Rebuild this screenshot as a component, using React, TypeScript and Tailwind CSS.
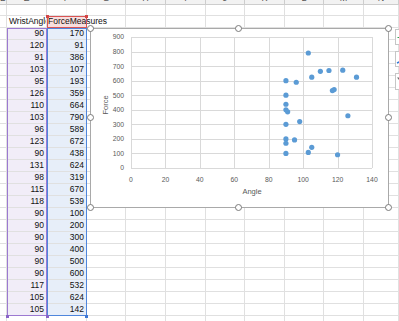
import React from 'react';

const angles = [90, 120, 91, 103, 95, 126, 110, 103, 96, 123, 90, 131, 98, 115, 118, 90, 90, 90, 90, 90, 90, 117, 105, 105];
const forces = [170, 91, 386, 107, 193, 359, 664, 790, 589, 672, 438, 624, 319, 670, 539, 100, 200, 300, 400, 500, 600, 532, 624, 142];

// sheet columns after E/F (width classes written out in full)
const restCols = [
  { letter: 'G', w: 'w-[39px]' },
  { letter: 'H', w: 'w-[40px]' },
  { letter: 'I', w: 'w-[40px]' },
  { letter: 'J', w: 'w-[39px]' },
  { letter: 'K', w: 'w-[40px]' },
  { letter: 'L', w: 'w-[39px]' },
  { letter: 'M', w: 'w-[40px]' },
  { letter: 'N', w: 'w-[35px]' },
];

const ROWS = 26; // title row + 24 data rows + 1 spare

function ColHeader({ letter }: { letter: string }) {
  return (
    <div className="h-[5px] overflow-hidden border-b border-r border-[#cdcdcd] bg-[#f2f2f2] text-center text-[9px] leading-[9px] text-[#555]">
      <div className="-mt-[6px]">{letter}</div>
    </div>
  );
}

function Cell({ children, className = '' }: { children?: React.ReactNode; className?: string }) {
  return (
    <div className={`h-[12px] border-b border-r border-[#e0e0e0] text-[8.5px] leading-[11px] whitespace-nowrap ${className}`}>
      {children}
    </div>
  );
}

function Handle({ className }: { className: string }) {
  return <div className={`absolute h-[7px] w-[7px] rounded-full border border-[#7a7a7a] bg-white ${className}`} />;
}

const X = (a: number) => 40 + (a * 241) / 140;
const Y = (f: number) => 139 - (f * 131) / 900;

function Chart() {
  const yTicks = [0, 100, 200, 300, 400, 500, 600, 700, 800, 900];
  const xTicks = [0, 20, 40, 60, 80, 100, 120, 140];
  const font = "'Liberation Sans', Arial, sans-serif";
  return (
    <svg width="297" height="178" className="block">
      {yTicks.map(v => (
        <line key={'h' + v} x1={40} x2={281} y1={Math.round(Y(v)) + 0.5} y2={Math.round(Y(v)) + 0.5} stroke="#d9d9d9" strokeWidth="1" />
      ))}
      {xTicks.map(v => (
        <line key={'v' + v} x1={Math.round(X(v)) + 0.5} x2={Math.round(X(v)) + 0.5} y1={8} y2={139} stroke="#d9d9d9" strokeWidth="1" />
      ))}
      {yTicks.map(v => (
        <text key={'yt' + v} x={33} y={Y(v) + 2.4} textAnchor="end" fontSize="6.8" fill="#595959" fontFamily={font}>
          {v}
        </text>
      ))}
      {xTicks.map(v => (
        <text key={'xt' + v} x={X(v)} y={153} textAnchor="middle" fontSize="6.8" fill="#595959" fontFamily={font}>
          {v}
        </text>
      ))}
      <text x={16.5} y={76} transform="rotate(-90 16.5 76)" textAnchor="middle" fontSize="7.5" fill="#595959" fontFamily={font}>
        Force
      </text>
      <text x={161} y={164.5} textAnchor="middle" fontSize="7.5" fill="#595959" fontFamily={font}>
        Angle
      </text>
      {angles.map((a, i) => (
        <circle key={i} cx={X(a)} cy={Y(forces[i])} r="2.6" fill="#5b9bd5" />
      ))}
    </svg>
  );
}

export default function App() {
  return (
    <div className="relative h-[321px] w-[399px] overflow-hidden bg-white font-['Liberation_Sans',Arial,sans-serif] text-[#111]">
      <div className="flex">
        {/* D (partial) */}
        <div className="flex w-[7px] shrink-0 flex-col">
          <ColHeader letter="D" />
          <div className="h-[11px] border-b border-r border-[#e0e0e0]" />
          {Array.from({ length: ROWS }).map((_, i) => (
            <Cell key={i} />
          ))}
        </div>

        {/* E */}
        <div className="flex w-[40px] shrink-0 flex-col">
          <ColHeader letter="E" />
          <div className="h-[11px] border-b border-r border-[#e0e0e0]" />
          <Cell className="overflow-hidden pl-[2px]">WristAngle</Cell>
          <div className="relative bg-[#f1edf8] outline-1 -outline-offset-1 outline-[#9c79d1]">
            {angles.map((a, i) => (
              <Cell key={i} className="pr-[2px] text-right">
                {a}
              </Cell>
            ))}
            <div className="absolute -bottom-[2px] -left-[1px] h-[3px] w-[3px] bg-[#8a63c8]" />
          </div>
          <Cell />
        </div>

        {/* F */}
        <div className="flex w-[40px] shrink-0 flex-col">
          <ColHeader letter="F" />
          <div className="h-[11px] border-b border-r border-[#e0e0e0]" />
          <div className="relative h-[12px] bg-[#f8dede] pl-[1px] text-[8.5px] leading-[11px] whitespace-nowrap outline-1 -outline-offset-1 outline-[#d95454]">
            ForceMeasures
            <div className="absolute -left-[1px] -top-[1px] h-[3px] w-[3px] bg-[#d24545]" />
            <div className="absolute -right-[1px] -top-[1px] h-[3px] w-[3px] bg-[#d24545]" />
          </div>
          <div className="relative bg-[#e7eef9] outline-1 -outline-offset-1 outline-[#4f86dc]">
            {forces.map((f, i) => (
              <Cell key={i} className="pr-[2px] text-right">
                {f}
              </Cell>
            ))}
            <div className="absolute -bottom-[2px] -left-[1px] h-[3px] w-[3px] bg-[#8a63c8]" />
            <div className="absolute -bottom-[2px] -right-[1px] h-[3px] w-[3px] bg-[#3f78d6]" />
          </div>
          <Cell />
        </div>

        {restCols.map(c => (
          <div key={c.letter} className={`flex ${c.w} shrink-0 flex-col`}>
            <ColHeader letter={c.letter} />
            <div className="h-[11px] border-b border-r border-[#e0e0e0]" />
            {Array.from({ length: ROWS }).map((_, i) => (
              <Cell key={i} />
            ))}
          </div>
        ))}
      </div>

      {/* floating chart */}
      <div className="absolute left-[90px] top-[28px] h-[180px] w-[299px] border border-[#a9a9a9] bg-white">
        <Chart />
      </div>
      <Handle className="left-[87px] top-[25px]" />
      <Handle className="left-[235px] top-[25px]" />
      <Handle className="left-[385px] top-[25px]" />
      <Handle className="left-[87px] top-[114px]" />
      <Handle className="left-[385px] top-[114px]" />
      <Handle className="left-[87px] top-[204px]" />
      <Handle className="left-[235px] top-[204px]" />
      <Handle className="left-[385px] top-[204px]" />

      {/* chart side buttons, cut off by the window edge */}
      <div className="absolute left-[395px] top-[29px] flex flex-col gap-[6px]">
        <div className="h-[16px] w-[18px] border border-[#c6c6c6] bg-white">
          <svg width="16" height="14">
            <line x1="1.5" y1="7.5" x2="11.5" y2="7.5" stroke="#2e9e4f" strokeWidth="1.2" />
            <line x1="6.5" y1="2.5" x2="6.5" y2="12.5" stroke="#2e9e4f" strokeWidth="1.2" />
          </svg>
        </div>
        <div className="h-[16px] w-[18px] border border-[#c6c6c6] bg-white">
          <svg width="16" height="14">
            <line x1="1" y1="11" x2="3.5" y2="10" stroke="#2f7ad6" strokeWidth="1.6" />
            <line x1="4" y1="9.5" x2="10" y2="3" stroke="#2f7ad6" strokeWidth="1" />
          </svg>
        </div>
        <div className="h-[17px] w-[18px] border border-[#c6c6c6] bg-white">
          <svg width="16" height="15">
            <path d="M1 3.5 L6 3.5 L4 6 L4 9 L3 9 L3 6 Z" fill="#6b6b6b" />
          </svg>
        </div>
      </div>
    </div>
  );
}
